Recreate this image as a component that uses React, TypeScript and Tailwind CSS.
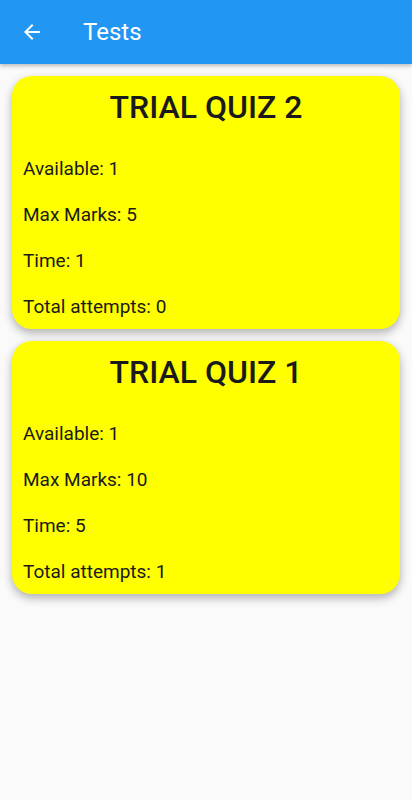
import React from 'react';

interface Quiz {
  title: string;
  available: number;
  maxMarks: number;
  time: number;
  attempts: number;
}

const quizzes: Quiz[] = [
  { title: 'TRIAL QUIZ 2', available: 1, maxMarks: 5, time: 1, attempts: 0 },
  { title: 'TRIAL QUIZ 1', available: 1, maxMarks: 10, time: 5, attempts: 1 },
];

const QuizCard: React.FC<{ quiz: Quiz }> = ({ quiz }) => {
  return (
    <div className="bg-[#ffff00] rounded-[20px] pt-3 pb-[11px] shadow-[0_4px_10px_rgba(0,0,0,0.3)]">
      <h2 className="h-[38px] leading-[38px] text-center text-[32px] font-medium text-[#1a1a1a]">{quiz.title}</h2>
      <div className="mt-2 px-[11px] text-[19px] leading-[22px] text-[#1a1a1a]">
        <p className="pt-6">Available: {quiz.available}</p>
        <p className="pt-6">Max Marks: {quiz.maxMarks}</p>
        <p className="pt-6">Time: {quiz.time}</p>
        <p className="pt-6">Total attempts: {quiz.attempts}</p>
      </div>
    </div>
  );
};

export default function App() {
  return (
    <div className="w-[412px] h-[800px] bg-[#fafafa] font-['Roboto',sans-serif]">
      <header className="h-16 bg-[#2196f3] flex items-center shadow-[0_2px_4px_rgba(0,0,0,0.25)]">
        <button className="w-14 h-14 ml-1 flex items-center justify-center text-white">
          <svg width="24" height="24" viewBox="0 0 24 24" fill="white">
            <path d="M20 11H7.83l5.59-5.59L12 4l-8 8 8 8 1.41-1.41L7.83 13H20v-2z" />
          </svg>
        </button>
        <h1 className="ml-[23px] text-white text-[24px] font-normal">Tests</h1>
      </header>
      <main className="px-3 pt-3 flex flex-col gap-3">
        {quizzes.map((q) => (
          <QuizCard key={q.title} quiz={q} />
        ))}
      </main>
    </div>
  );
}
